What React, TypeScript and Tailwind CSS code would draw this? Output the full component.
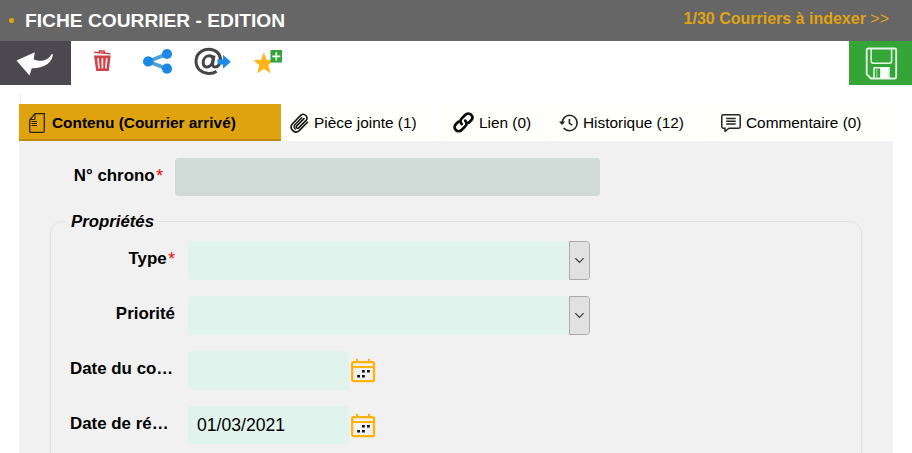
import React from "react";

const font = "font-['Liberation_Sans',Arial,sans-serif]";

function Tab({ className, icon, label }: { className: string; icon: React.ReactNode; label: string }) {
  return (
    <div className={`flex h-[37px] shrink-0 items-center bg-[#fffffb] text-[15.4px] leading-[18px] whitespace-nowrap text-black ${className}`}>
      {icon}
      <span>{label}</span>
    </div>
  );
}

function Calendar() {
  return (
    <svg className="ml-[2px] h-[26px] w-[26px] shrink-0" viewBox="0 0 26 26">
      <rect x="1.2" y="4.2" width="21.8" height="19" rx="1.5" fill="none" stroke="#fdb40a" strokeWidth="2.3" />
      <path d="M1 9H23M6 .8V5M18 .8V5" stroke="#fdb40a" strokeWidth="2.1" />
      <path d="M11 12h2.8v2.6H11zM16 12h2.8v2.6H16zM6.2 17h2.8v2.6H6.2zM11 17h2.8v2.6H11z" fill="#111" />
    </svg>
  );
}

function Select() {
  return (
    <div className="flex h-[39px] w-[402px] overflow-hidden rounded-[4px] bg-[#e0f3ec]">
      <div className="ml-auto flex w-[21px] items-center rounded-r-[3px] border border-[#acacac] bg-[#e1e1e1] pl-[5px]">
        <svg className="h-[6px] w-[10px]" viewBox="0 0 10 6">
          <path d="M.4.2L4.5 4.3L8.6.2" fill="none" stroke="#3a3a3a" strokeWidth="1.2" />
        </svg>
      </div>
    </div>
  );
}

function Required() {
  return <span className="ml-[1.5px] text-[17.6px] font-normal text-[#f00]">*</span>;
}

function Row({ label, required, children, left }: { label: string; required?: boolean; left?: boolean; children: React.ReactNode }) {
  return (
    <div className="flex h-[39px] shrink-0">
      <div className={`mr-[13px] flex w-[124px] pt-[8px] text-[16.9px] leading-[20px] font-bold whitespace-nowrap ${left ? "pl-[19px]" : "justify-end"}`}>
        {label}
        {required && <Required />}
      </div>
      {children}
    </div>
  );
}

export default function App() {
  return (
    <div className={`flex h-[453px] w-[912px] flex-col overflow-hidden bg-white text-black ${font}`}>
      <header className="flex h-[41px] shrink-0 bg-[#666]">
        <span className="mt-[18px] ml-[9px] h-[5px] w-[5px] rounded-[2px] bg-[#e0a310]" />
        <h1 className="mt-[10px] ml-[11px] text-[19.2px] leading-[22px] font-bold text-white">FICHE COURRIER - EDITION</h1>
        <div className="mt-[10px] mr-[23px] ml-auto text-[16px] leading-[18px] text-[#e0a310]">
          <b>1/30 Courriers à indexer</b> &gt;&gt;
        </div>
      </header>

      <div className="flex h-[44px] shrink-0">
        <div className="flex w-[71px] bg-[#4b4850]">
          <svg className="mt-[10px] ml-[16px] h-[26px] w-[38px]" viewBox="0 0 38 26">
            <path d="M.5 9.5L18.8 1.2L17.7 8.5C26 11.5 32.5 9 35.3 3.5L37 3C36.5 11 29 17.5 15.8 17.2L13.5 24.5Z" fill="#fff" />
          </svg>
        </div>
        <svg className="mt-[9px] ml-[22px] h-[22px] w-[19px]" viewBox="0 0 19 22">
          <path d="M1.2 2.2L17.3 3.8M6.4 2L6.7.8L11.4 1.2L11.2 3" fill="none" stroke="#cc4348" strokeWidth="1.5" />
          <path d="M1 5.5H17.7L15.8 21H3.2Z" fill="#cc4348" />
          <path d="M5 8.2L6 18.5M9.4 8.2V18.5M13.8 8.2L12.8 18.5" stroke="#fbe8e8" strokeWidth="1.7" />
        </svg>
        <svg className="mt-[7px] ml-[30px] h-[27px] w-[31px]" viewBox="0 0 31 27">
          <path d="M25 6L6 13.5L25 20.7" fill="none" stroke="#4ca0dc" strokeWidth="3.6" />
          <circle cx="6.2" cy="13.4" r="5.2" fill="#1e88e5" /><circle cx="25" cy="6" r="5.1" fill="#1e88e5" /><circle cx="25" cy="20.7" r="5.1" fill="#1e88e5" />
        </svg>
        <svg className="mt-[6px] ml-[21px] h-[29px] w-[38px]" viewBox="0 0 38 29">
          <path d="M22.5 24.2C20 26 17.5 26.7 14.5 26.5C7.5 26.2 2 21.5 2 14.3C2 7.2 7.5 2.2 14.7 2.2C22 2.2 26.8 7 26.5 13.2C26.3 17 24 20 21.3 20C19 20 18.4 18.5 18.7 16.2L20 8.5" fill="none" stroke="#454545" strokeWidth="3" />
          <path d="M19.2 12C18.7 9.8 17.2 8.8 15.2 8.8C11.6 8.8 9.2 12 9.2 15.7C9.2 18.3 10.8 20 13.1 20C16.2 20 18.6 16.6 19.2 12Z" fill="none" stroke="#454545" strokeWidth="3" />
          <path d="M23.5 12.2H29V7.8L36.8 14.8L29 21.8V17.5H23.5Z" fill="#1e88e5" />
        </svg>
        <svg className="mt-[8px] ml-[21px] h-[27px] w-[30px]" viewBox="0 0 30 27">
          <path d="M10.9 3.2L13.5 10.8L20.9 11.2L15.3 16L17.3 24.2L10.8 19.8L4.3 24.2L6.2 16L.4 11.2L7.9 10.8Z" fill="#fdb515" />
          <rect x="17.5" y="1" width="11.5" height="12.5" fill="#31a53a" />
          <path d="M23.3 3.2V11.4M19.3 7.3H27.3" stroke="#fff" strokeWidth="1.7" />
        </svg>
        <div className="ml-auto flex w-[63px] bg-[#36a538]">
          <svg className="mt-[6px] ml-[16px] h-[34px] w-[33px]" viewBox="0 0 33 34">
            <path d="M3.2 1.5H29.8Q31.2 1.5 31.2 3V30Q31.2 31.5 29.8 31.5H6L1.7 27.2V3Q1.7 1.5 3.2 1.5Z" fill="none" stroke="#e7f8e8" strokeWidth="1.8" />
            <path d="M6.2 1.5V14Q6.2 16.2 8.4 16.2H24.4Q26.6 16.2 26.6 14V1.5M9 31V20.8H24V31" fill="none" stroke="#e7f8e8" strokeWidth="1.5" />
            <path d="M15.2 21H23.5V31H15.2Z" fill="#fff" /><path d="M11.8 21V30" stroke="#abdbae" strokeWidth="1" />
          </svg>
        </div>
      </div>

      <main className="mx-[19px] flex min-h-0 flex-1 flex-col pt-[9px]">
        <div className="ml-[1px] h-[10px] shrink-0 border-l border-[#ece4e8]" />
        <nav className="flex h-[37px] shrink-0 bg-[#fffff5]">
          <div className="flex w-[262px] shrink-0 items-center border-b-2 border-[#be8c13] bg-[#e0a310] text-[15.4px] font-bold whitespace-nowrap">
            <svg className="mt-[2px] ml-[10px] h-[20px] w-[16px]" viewBox="0 0 16 20">
              <path d="M6 .7H15.3V18Q15.3 19.3 14 19.3H2Q.7 19.3.7 18V7Z" fill="none" stroke="#2d230b" strokeWidth="1.3" />
              <path d="M6 1V6.5H1" fill="none" stroke="#2d230b" strokeWidth="1" />
              <path d="M2.5 8.5H8M2.5 10.5H8M2.5 12.5H8" stroke="#2d230b" />
            </svg>
            <span className="mt-[2px] ml-[7px] leading-[18px]">Contenu (Courrier arrivé)</span>
          </div>
          <Tab className="w-[162px] gap-[5px] pl-[9px]" label="Pièce jointe (1)" icon={
            <svg className="h-[20px] w-[19px]" viewBox="0 0 19 20">
              <path d="M14.2 5.4L7 12.7A1.4 1.4 0 0 0 9 14.7L16.4 7.2A3.7 3.7 0 0 0 11.2 2L2.6 10.8A4.8 4.8 0 0 0 9.3 17.6L17.8 9" transform="translate(-.3 .2)" fill="none" stroke="#151515" strokeWidth="1.6" strokeLinecap="round" />
              <path d="M11.7 4.7L4.8 11.7A2.9 2.9 0 0 0 5.3 16" fill="none" stroke="#151515" strokeWidth="1.4" strokeLinecap="round" />
            </svg>
          } />
          <Tab className="ml-[4px] w-[101px] gap-[5px] pl-[6px]" label="Lien (0)" icon={
            <svg className="h-[21px] w-[21px]" viewBox="0 0 21 21">
              <g fill="none" stroke="#080808" strokeWidth="2.7" strokeLinecap="round">
                <path d="M8.8 12.1C6.7 9.8 7.3 7.9 8.8 6.4L12.4 2.8C14 1.2 16.7 1.3 18.2 2.8C19.7 4.4 19.7 6.7 18.2 8.3L15.7 10.8" />
                <path d="M12.2 8.6C14 10.7 13.8 12.8 12.2 14.4L8.6 18C7 19.6 4.4 19.6 2.8 18C1.2 16.4 1.2 13.9 2.8 12.3L5.4 9.7" />
              </g>
            </svg>
          } />
          <Tab className="ml-[4px] w-[159px] gap-[5px] pl-[7px]" label="Historique (12)" icon={
            <svg className="h-[18px] w-[19px]" viewBox="0 0 19 18">
              <path d="M3.1 9.6C3 4.8 6.4 1.2 10.6 1.2C14.9 1.2 18.1 4.7 18.1 9C18.1 13.4 14.7 16.7 10.5 16.7C8 16.7 6 15.6 4.6 14M10.4 5V9.4L13.3 11.1" fill="none" stroke="#252525" strokeWidth="1.6" />
              <path d="M0 7.6H6.2L3.1 11.1Z" fill="#252525" />
            </svg>
          } />
          <Tab className="ml-[4px] w-[177px] gap-[5px] pl-[6px]" label="Commentaire (0)" icon={
            <svg className="h-[18px] w-[20px]" viewBox="0 0 20 18">
              <path d="M2.2.8H17.8Q19.2.8 19.2 2.2V12.8Q19.2 14.2 17.8 14.2H8L4 17.3V14.2H2.2Q.8 14.2.8 12.8V2.2Q.8.8 2.2.8Z" fill="none" stroke="#252525" strokeWidth="1.5" />
              <path d="M5.2 4.5H14.7M5.2 7.2H14.7M5.2 9.9H14.7" stroke="#252525" strokeWidth="1.5" />
            </svg>
          } />
        </nav>

        <section className="flex min-h-0 flex-1 flex-col overflow-hidden bg-[#f1f1f1] pt-[17px]">
          <div className="flex h-[38px] shrink-0">
            <div className="mr-[12px] flex w-[144px] justify-end pt-[8px] text-[16.9px] leading-[20px] font-bold whitespace-nowrap">
              N° chrono<Required />
            </div>
            <div className="w-[425px] rounded-[4px] bg-[#cfdbd7]" />
          </div>
          <fieldset className="mt-[15px] ml-[31px] h-[270px] w-[812px] shrink-0 rounded-[12px] border border-[#e3e0e1]">
            <legend className="ml-[15px] h-[20px] px-[5px] text-[16.8px] leading-[20px] font-bold italic"><span className="block pt-[1px]">Propriétés</span></legend>
            <div className="mt-[10px] flex flex-col gap-[16px]">
              <Row label="Type" required><Select /></Row>
              <Row label="Priorité"><Select /></Row>
              <Row label="Date du co…" left>
                <div className="h-[39px] w-[161px] rounded-[4px] bg-[#e0f3ec]" />
                <div className="flex pt-[7px]"><Calendar /></div>
              </Row>
              <Row label="Date de ré…" left>
                <div className="h-[38px] w-[161px] rounded-[4px] bg-[#e0f3ec] pt-[9px] pl-[9px] text-[17.6px] leading-[20px]">01/03/2021</div>
                <div className="flex pt-[7px]"><Calendar /></div>
              </Row>
            </div>
          </fieldset>
        </section>
      </main>
    </div>
  );
}
